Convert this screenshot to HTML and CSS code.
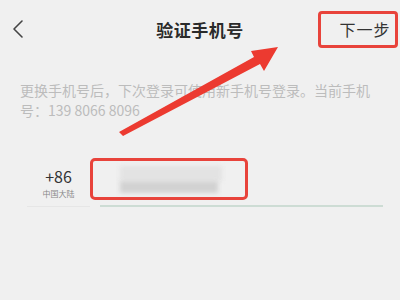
FILE: index.html
```html
<!DOCTYPE html>
<html lang="zh">
<head>
<meta charset="utf-8">
<link rel="stylesheet" href="styles.css">
</head>
<body>
<div class="page">
  <header class="bar">
    <div class="back">
      <svg width="12" height="20" viewBox="0 0 12 20"><path d="M10 2 L2 10 L10 18" fill="none" stroke="#444" stroke-width="1.6" stroke-linecap="round" stroke-linejoin="round"/></svg>
    </div>
    <h1 class="title">验证手机号</h1>
    <button class="next">下一步</button>
  </header>
  <p class="desc">更换手机号后，下次登录可使用新手机号登录。当前手机号：139 8066 8096</p>
  <div class="phone-row">
    <div class="country">
      <div class="code">+86</div>
      <div class="region">中国大陆</div>
    </div>
    <div class="field">
      <div class="input-box">
        <div class="blur-top"></div>
        <div class="blur-bottom"></div>
      </div>
      <div class="underline"></div>
    </div>
  </div>
  <svg class="arrow" width="400" height="300" viewBox="0 0 400 300">
    <polygon points="119,132 254,57 251,51 278,47 264,71 260,64 123,136" fill="#ec3a30"/>
  </svg>
</div>
</body>
</html>
```
FILE: styles.css
```css
* { box-sizing: border-box; }
html, body { margin: 0; padding: 0; }
body {
  background: #f0f0f0;
  font-family: "Noto Sans CJK SC", "Noto Sans", sans-serif;
  width: 400px;
  height: 300px;
  overflow: hidden;
}
.page { position: relative; width: 400px; height: 300px; }
.bar {
  display: grid;
  grid-template-columns: 1fr auto 1fr;
  align-items: center;
  height: 58px;
}
.back { padding-left: 12px; display: flex; align-items: center; padding-top: 0px; }
.title {
  margin: 0;
  font-size: 17px;
  font-weight: 700;
  color: #2a2a2a;
  letter-spacing: 0.5px;
}
.next {
  justify-self: end;
  margin-right: 2px;
  width: 80px;
  height: 37px;
  border: 3px solid #e8433b;
  border-radius: 4px;
  background: transparent;
  font-family: inherit;
  font-size: 16px;
  color: #333;
  padding: 0 0 0 14px;
  letter-spacing: 1px;
}
.desc {
  margin: 22px 0 0;
  padding: 0 18px 0 20px;
  font-size: 14px;
  line-height: 20px;
  color: #bcbcbc;
}
.phone-row {
  display: flex;
  margin-top: 38px;
  padding-left: 27px;
  padding-right: 17px;
}
.country {
  width: 63px;
  display: flex;
  flex-direction: column;
  align-items: center;
  padding-top: 8px;
  border-bottom: 1px solid #e6e6e6;
  height: 49px;
}
.code { font-size: 16px; line-height: 20px; color: #333; }
.region { font-size: 8px; line-height: 12px; color: #888; margin-top: 2px; }
.field { flex: 1; }
.input-box {
  width: 158px;
  height: 42px;
  border: 3px solid #e8433b;
  border-radius: 5px;
  padding: 5px 0 0 27px;
}
.blur-top {
  width: 102px;
  height: 15px;
  background: #e3e3e3;
  filter: blur(2px);
}
.blur-bottom {
  width: 98px;
  height: 12px;
  background: #d2d2d2;
  filter: blur(2px);
}
.underline {
  margin: 5px 0 0 10px;
  height: 2px;
  background: #cddcd4;
}
.arrow { position: absolute; left: 0; top: 0; pointer-events: none; }
```
